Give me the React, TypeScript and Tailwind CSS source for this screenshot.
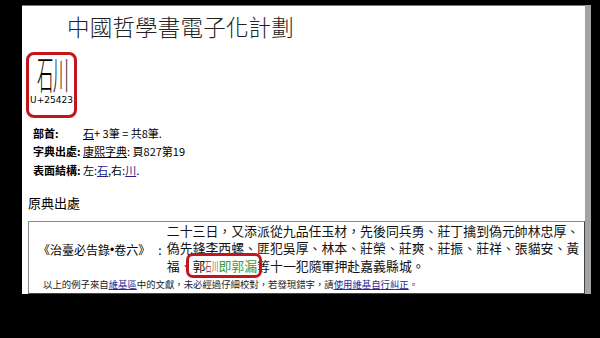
const sans = '"Noto Sans CJK TC", "Noto Sans CJK JP", sans-serif'

function Row({ label, children }: { label: string; children: React.ReactNode }) {
  return (
    <div className="flex h-[18.5px] items-center text-[11px] leading-none">
      <span className="w-[50px] font-bold">{label}</span>
      <span>{children}</span>
    </div>
  )
}

// U+25423 is missing from the installed fonts, so build it from 石 and 川
function ShiChuan({ size }: { size: 'big' | 'small' }) {
  if (size === 'big') {
    return (
      <span className="inline-flex font-light">
        <span className="inline-block w-[16px] origin-left scale-x-[0.42]">石</span>
        <span className="inline-block w-[16px] origin-left scale-x-[0.4]">川</span>
      </span>
    )
  }
  return (
    <span className="inline-flex">
      <span className="inline-block w-[6.5px] origin-left scale-x-[0.5]">石</span>
      <span className="inline-block w-[6.5px] origin-left scale-x-[0.5]">川</span>
    </span>
  )
}

export default function App() {
  return (
    <div
      className="h-[338px] w-[600px] overflow-hidden bg-black pl-[22px] pt-[5px]"
      style={{ fontFamily: sans }}
    >
      <div className="flex h-[289px] w-[569px]">
        <div className="flex w-[563px] flex-col border-t border-[#777] bg-white text-black">
          <h1 className="ml-[45px] mt-[7px] text-[22.5px] leading-[26px] font-light tracking-[0.2px] text-[#222]">
            中國哲學書電子化計劃
          </h1>

          <div className="ml-[4px] mt-[13px] flex h-[66px] w-[51px] flex-col items-center rounded-[8px] border-[3px] border-[#c4141c]">
            <span className="-mt-[3px] h-[42px] pl-[2px] text-[39px] leading-[40px]">
              <ShiChuan size="big" />
            </span>
            <span
              className="text-[9px] leading-[12px]"
              style={{ fontFamily: '"DejaVu Sans", sans-serif' }}
            >
              U+25423
            </span>
          </div>

          <div className="ml-[11px] mt-[6px] flex flex-col">
            <Row label="部首:">
              <span className="underline">石</span>+ 3筆 = 共8筆.
            </Row>
            <Row label="字典出處:">
              <span className="underline">康熙字典</span>: 頁827第19
            </Row>
            <Row label="表面結構:">
              左:<span className="text-[#22228a] underline">石</span>,右:
              <span className="text-[#22228a] underline">川</span>.
            </Row>
          </div>

          <div className="ml-[6px] mt-[14px] text-[13px] leading-[18px]">原典出處</div>

          <div className="ml-[6px] mt-[9px] flex h-[73px] w-[557px] flex-col border border-t-[#888] border-l-[#888] border-b-[#444] border-r-[#444]">
            <div className="flex flex-1">
              <div className="flex w-[138px] items-center whitespace-nowrap pl-[9px] text-[12px] leading-none">
                《治臺必告錄<span style={{ fontFamily: '"Liberation Sans", sans-serif' }}>•</span>卷六》
                <span className="ml-[8px]">:</span>
              </div>
              <div className="w-[418px] text-[12.9px] leading-[17.5px] text-[#111]">
                二十三日，又添派從九品任玉材，先後同兵勇、莊丁擒到偽元帥林忠厚、偽先鋒李西螺、匪犯吳厚、林本、莊榮、莊爽、莊振、莊祥、張貓安、黃福、
                <span className="relative">
                  郭<span className="text-[#b03838]"><ShiChuan size="small" /></span>
                  <span className="text-[#3c9a3c]">即郭漏</span>
                  <span className="absolute -left-[7px] -right-[5px] -top-[3px] -bottom-[3px] rounded-[7px] border-[3px] border-[#c4141c]" />
                </span>
                等十一犯隨軍押赴嘉義縣城。
              </div>
            </div>
            <div className="mb-[2px] pl-[14px] text-[9.4px] leading-[13px] text-[#222]">
              以上的例子來自<span className="text-[#2a2a9a] underline">維基區</span>
              中的文獻，未必經過仔細校對，若發現錯字，請
              <span className="text-[#2a2a9a] underline">使用維基自行糾正</span>。
            </div>
          </div>
        </div>
        <div className="w-[6px] bg-[#a3a3a3]" />
      </div>
    </div>
  )
}
